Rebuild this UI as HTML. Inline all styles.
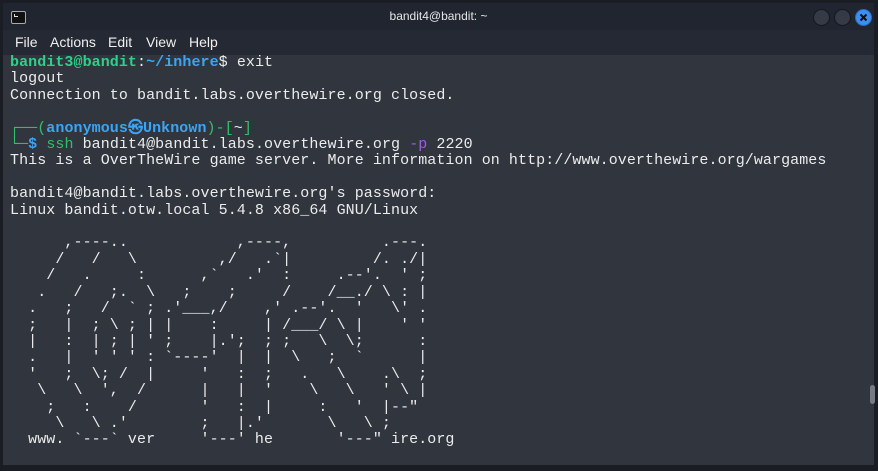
<!DOCTYPE html>
<html><head><meta charset="utf-8"><style>
html,body{margin:0;padding:0;width:878px;height:471px;overflow:hidden;background:#1a1d24;}
.win{position:absolute;left:3px;top:3px;width:871px;height:462px;background:#30353e;}
.title{position:absolute;left:0;top:0;width:871px;height:27px;background:#212530;}
.title .t{position:absolute;left:0;right:0;top:6px;text-align:center;color:#e6e6e6;font:12px "Liberation Sans",sans-serif;}
.ico{position:absolute;left:8px;top:8px;width:13px;height:11px;border:1px solid #aaa;border-radius:2px;background:#111;}
.ico:after{content:"";position:absolute;left:2px;top:2px;width:3px;height:2px;border-left:1px solid #ddd;border-bottom:1px solid #ddd;}
.btn{position:absolute;top:6px;width:15px;height:15px;border-radius:50%;background:#353a46;border:1px solid #15171c;}
.menu{position:absolute;left:0;top:27px;width:871px;height:25px;background:#252933;color:#f0f0f0;font:14px "Liberation Sans",sans-serif;}
.menu span{position:absolute;top:4px;}
pre{position:absolute;left:7px;top:52px;margin:0;font:15px/16.4px "Liberation Mono",monospace;color:#ececec;letter-spacing:0.07px;}
.g{color:#2fd08a;font-weight:bold}.b{color:#3ba5f5;font-weight:bold}
.gr{color:#2fc06a}.bl{color:#3ba5f5;font-weight:bold}.p{color:#9b5fe0}
.sb{position:absolute;left:867px;top:382px;width:5px;height:19px;border-radius:3px;background:#777b84;}
</style></head><body>
<div class="win">
<div class="title"><div class="ico"></div><div class="t">bandit4@bandit: ~</div>
<div class="btn" style="left:810px"></div><div class="btn" style="left:831px"></div>
<div class="btn" style="left:852px;background:#3d8ef0;border-color:#2a6ac0;"><svg width="15" height="15" viewBox="0 0 15 15"><path d="M4.5 4.5L10.5 10.5M10.5 4.5L4.5 10.5" stroke="#111" stroke-width="2"/></svg></div>
</div>
<div class="menu"><span style="left:12px">File</span><span style="left:47px">Actions</span><span style="left:105px">Edit</span><span style="left:143px">View</span><span style="left:186px">Help</span></div>
<pre><span class="g">bandit3@bandit</span>:<span class="b">~/inhere</span>$ exit
logout
Connection to bandit.labs.overthewire.org closed.

<span class="gr">┌──(</span><span class="bl">anonymous㉿Unknown</span><span class="gr">)-[</span>~<span class="gr">]</span>
<span class="gr">└─</span><span class="bl">$</span> <span class="gr">ssh</span> bandit4@bandit.labs.overthewire.org <span class="p">-p</span> 2220
This is a OverTheWire game server. More information on http://www.overthewire.org/wargames

bandit4@bandit.labs.overthewire.org's password:
Linux bandit.otw.local 5.4.8 x86_64 GNU/Linux

      ,----..            ,----,          .---.
     /   /   \         ,/   .`|         /. ./|
    /   .     :      ,`   .'  :     .--'.  ' ;
   .   /   ;.  \   ;    ;     /    /__./ \ : |
  .   ;   /  ` ; .'___,/    ,' .--'.  '   \' .
  ;   |  ; \ ; | |    :     | /___/ \ |    ' '
  |   :  | ; | ' ;    |.';  ; ;   \  \;      :
  .   |  ' ' ' : `----'  |  |  \   ;  `      |
  '   ;  \; /  |     '   :  ;   .   \    .\  ;
   \   \  ',  /      |   |  '    \   \   ' \ |
    ;   :    /       '   :  |     :   '  |--"
     \   \ .'        ;   |.'       \   \ ;
  www. `---` ver     '---' he       '---" ire.org</pre>
<div class="sb"></div>
</div>
</body></html>
